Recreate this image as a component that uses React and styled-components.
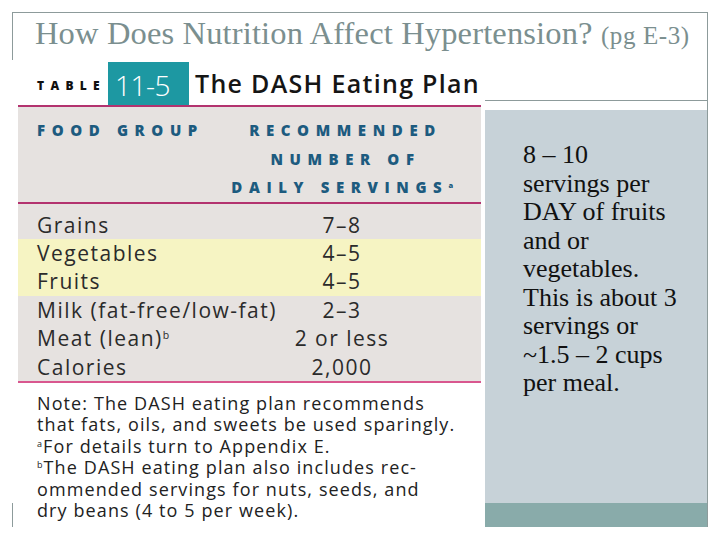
import React from "react"
import styled, { createGlobalStyle } from "styled-components"

const GlobalStyle = createGlobalStyle`
  html, body {
    margin: 0;
    padding: 0;
    background: #ffffff;
  }
`

const Slide = styled.div`
  width: 720px;
  height: 540px;
  padding-top: 12px;
  box-sizing: border-box;
  overflow: hidden;
  background: #ffffff;
`

const Frame = styled.div`
  position: relative;
  margin-left: 12px;
  width: 696px;
  height: 515px;
  box-sizing: border-box;
  border-top: 1px solid #8d9b9b;
  border-right: 1px solid #8d9b9b;
  display: flex;
  flex-direction: column;

  &::before,
  &::after {
    content: "";
    position: absolute;
    left: 0;
    width: 1px;
    background: #8d9b9b;
  }
  &::before {
    top: 0;
    height: 47px;
  }
  &::after {
    bottom: 0;
    height: 24px;
  }
`

const Title = styled.h1`
  margin: 0;
  height: 49px;
  padding-left: 23px;
  font-family: "Liberation Serif", "Times New Roman", serif;
  font-weight: normal;
  font-size: 32.5px;
  letter-spacing: 0.15px;
  line-height: 40px;
  color: #7b8f8f;
  white-space: nowrap;
`

const PageRef = styled.span`
  font-size: 25px;
  letter-spacing: 0.6px;
`

const Body = styled.div`
  flex: 1;
  display: flex;
  gap: 4px;
  padding-left: 6px;
`

const Table = styled.div`
  width: 463px;
  display: flex;
  flex-direction: column;
  font-family: "Open Sans", "Liberation Sans", sans-serif;
`

const TableHead = styled.div`
  height: 43px;
  display: flex;
  align-items: flex-end;
  border-bottom: 2px solid #b3336f;
`

const TableLabel = styled.span`
  margin: 0 2px 11px 19px;
  font-size: 12px;
  font-weight: 800;
  letter-spacing: 6.3px;
  color: #111;
`

const TableNumber = styled.span`
  width: 81px;
  height: 43px;
  box-sizing: border-box;
  padding: 2px 0 0 7px;
  background: #1d98a2;
  color: #ffffff;
  font-size: 28px;
  font-weight: 300;
  line-height: 43px;
  letter-spacing: -0.5px;
`

const TableTitle = styled.span`
  margin: 0 0 8px 6px;
  font-size: 25px;
  font-weight: 600;
  letter-spacing: 1.3px;
  line-height: 28px;
  color: #151515;
`

const HeadGrid = styled.div`
  display: grid;
  grid-template-columns: 185px 1fr;
  padding-top: 9px;
  background: #e6e2e0;
  border-bottom: 2px solid #b3336f;
  color: #1d5b7f;
  font-size: 15px;
  font-weight: 800;
  letter-spacing: 6.6px;
  line-height: 28.5px;
`

const HeadCell = styled.div`
  padding-left: ${p => (p.center ? "7px" : "19px")};
  text-align: ${p => (p.center ? "center" : "left")};
  white-space: nowrap;
`

const Rows = styled.div`
  padding: 7px 0 0;
  background: #e6e2e0;
  border-bottom: 2px solid #d9578f;
`

const Row = styled.div`
  display: grid;
  grid-template-columns: 185px 1fr;
  height: 28.4px;
  align-items: center;
  background: ${p => (p.highlight ? "#f6f4c3" : "transparent")};
  font-size: 21px;
  letter-spacing: 1.5px;
  color: #2b2b2b;
`

const Food = styled.span`
  padding-left: 19px;
  white-space: nowrap;
`

const Amount = styled.span`
  text-align: center;
  white-space: nowrap;
`

const Sup = styled.sup`
  font-size: 0.5em;
  vertical-align: 0.7em;
  line-height: 0;
`

const Note = styled.div`
  padding: 10px 0 0 19px;
  font-size: 18px;
  letter-spacing: 1.1px;
  line-height: 21.5px;
  color: #222;
  white-space: nowrap;
`

const Side = styled.div`
  flex: 1;
  display: flex;
  flex-direction: column;
`

const Rule = styled.div`
  height: 1px;
  margin-top: 38px;
  background: #8d9b9b;
`

const Panel = styled.div`
  flex: 1;
  margin-top: 9px;
  display: flex;
  flex-direction: column;
  background: #c7d2d8;
`

const PanelText = styled.p`
  flex: 1;
  margin: 0;
  padding: 31px 6px 0 38px;
  font-family: "Liberation Serif", "Times New Roman", serif;
  font-size: 26px;
  line-height: 28.5px;
  color: #111;
  white-space: nowrap;
`

const Strip = styled.div`
  height: 24px;
  background: #89abaa;
`

const rows = [
  { food: "Grains", amount: "7–8" },
  { food: "Vegetables", amount: "4–5", highlight: true },
  { food: "Fruits", amount: "4–5", highlight: true },
  { food: "Milk (fat-free/low-fat)", amount: "2–3" },
  { food: "Meat (lean)", sup: "b", amount: "2 or less" },
  { food: "Calories", amount: "2,000" }
]

export default function App() {
  return (
    <Slide>
      <GlobalStyle />
      <Frame>
        <Title>
          How Does Nutrition Affect Hypertension? <PageRef>(pg E-3)</PageRef>
        </Title>
        <Body>
          <Table>
            <TableHead>
              <TableLabel>TABLE</TableLabel>
              <TableNumber>11-5</TableNumber>
              <TableTitle>The DASH Eating Plan</TableTitle>
            </TableHead>
            <HeadGrid>
              <HeadCell>FOOD GROUP</HeadCell>
              <HeadCell center>
                RECOMMENDED
                <br />
                NUMBER OF
                <br />
                DAILY SERVINGS<Sup>a</Sup>
              </HeadCell>
            </HeadGrid>
            <Rows>
              {rows.map(r => (
                <Row key={r.food} highlight={r.highlight}>
                  <Food>
                    {r.food}
                    {r.sup && <Sup>{r.sup}</Sup>}
                  </Food>
                  <Amount>{r.amount}</Amount>
                </Row>
              ))}
            </Rows>
            <Note>
              Note: The DASH eating plan recommends
              <br />
              that fats, oils, and sweets be used sparingly.
              <br />
              <Sup>a</Sup>For details turn to Appendix E.
              <br />
              <Sup>b</Sup>The DASH eating plan also includes rec-
              <br />
              ommended servings for nuts, seeds, and
              <br />
              dry beans (4 to 5 per week).
            </Note>
          </Table>
          <Side>
            <Rule />
            <Panel>
              <PanelText>
                8 – 10
                <br />
                servings per
                <br />
                DAY of fruits
                <br />
                and or
                <br />
                vegetables.
                <br />
                This is about 3
                <br />
                servings or
                <br />
                ~1.5 – 2 cups
                <br />
                per meal.
              </PanelText>
              <Strip />
            </Panel>
          </Side>
        </Body>
      </Frame>
    </Slide>
  )
}
